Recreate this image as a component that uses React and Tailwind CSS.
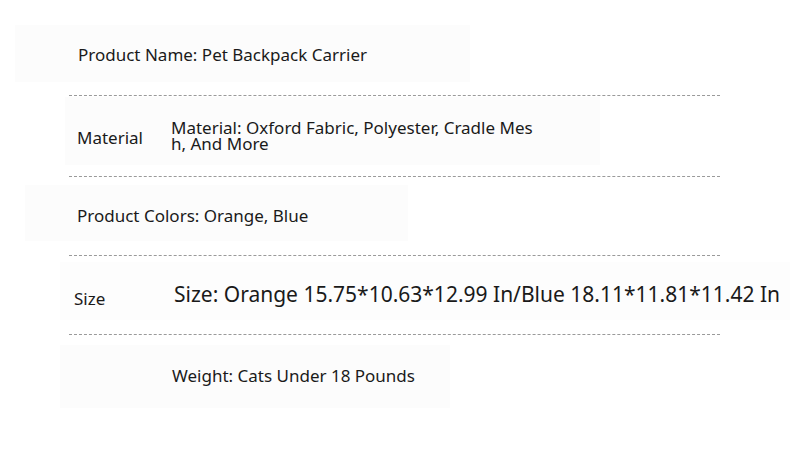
export default function App() {
  const font = { fontFamily: '"Noto Sans", "Open Sans", sans-serif' };
  const line = <div className="ml-[69px] w-[651px] border-t border-dashed border-[#9a9a9a]" />;
  return (
    <div className="w-[790px] h-[473px] bg-white overflow-hidden text-[#1a1a1a] flex flex-col text-[17px]" style={font}>
      <div className="h-[95px] pt-[25px]">
        <div className="ml-[15px] w-[455px] h-[57px] bg-[#fcfcfc] flex items-center pl-[63px] pt-[3px]">
          Product Name: Pet Backpack Carrier
        </div>
      </div>
      {line}
      <div className="h-[80px] pt-[1px]">
        <div className="ml-[65px] w-[535px] h-[68px] bg-[#fcfcfc] flex items-center">
          <div className="w-[106px] pl-[12px] pt-[13px]">Material</div>
          <div className="w-[366px] leading-[16px] break-all pt-[9px]">
            Material: Oxford Fabric, Polyester, Cradle Mesh, And More
          </div>
        </div>
      </div>
      {line}
      <div className="h-[78px] pt-[8px]">
        <div className="ml-[25px] w-[383px] h-[56px] bg-[#fcfcfc] flex items-center pl-[52px] pt-[6px]">
          Product Colors: Orange, Blue
        </div>
      </div>
      {line}
      <div className="h-[78px] pt-[6px]">
        <div className="ml-[60px] w-[730px] h-[58px] bg-[#fdfdfd] flex items-center whitespace-nowrap">
          <div className="w-[114px] pl-[14px] text-[17px] pt-[16px]">Size</div>
          <div className="text-[21px] pt-[8px]">Size: Orange 15.75*10.63*12.99 In/Blue 18.11*11.81*11.42 In</div>
        </div>
      </div>
      {line}
      <div className="pt-[10px]">
        <div className="ml-[60px] w-[390px] h-[63px] bg-[#fcfcfc] flex items-center pl-[112px] pb-[1px]">
          Weight: Cats Under 18 Pounds
        </div>
      </div>
    </div>
  );
}
